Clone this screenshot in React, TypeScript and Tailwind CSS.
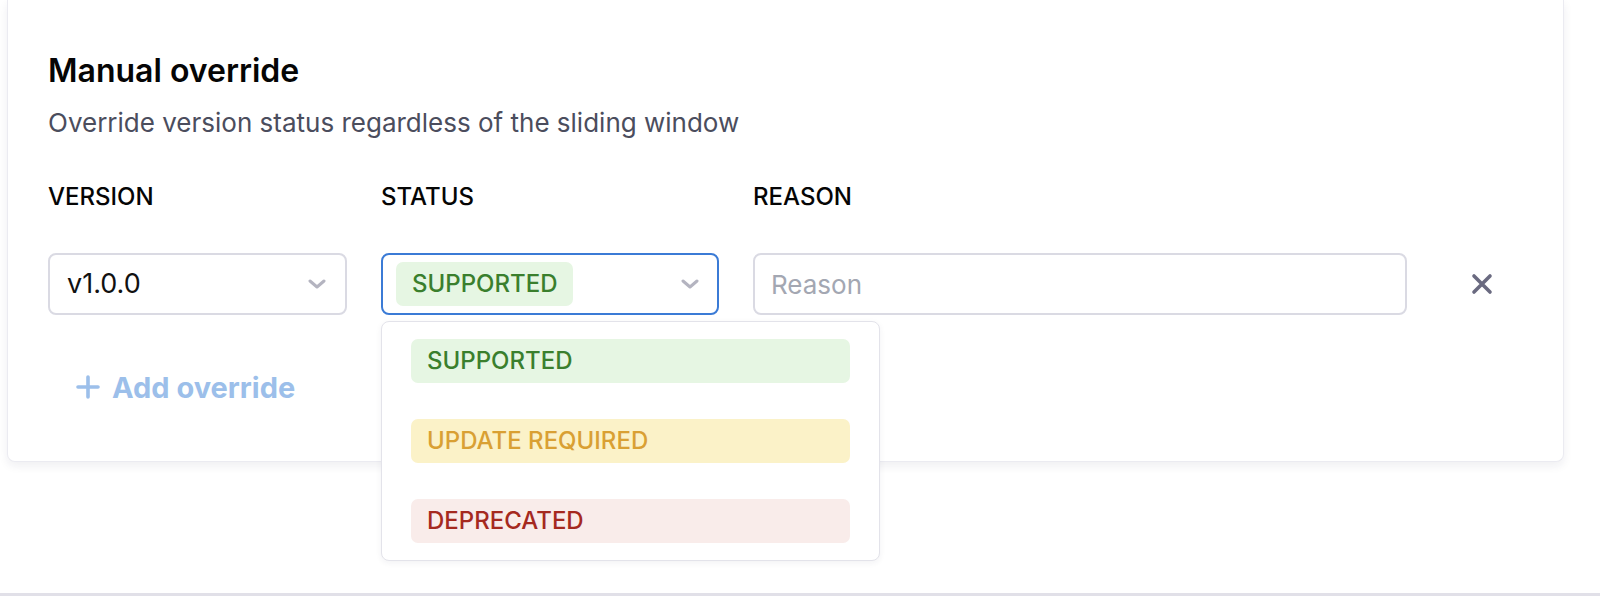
import React from "react";

const Chevron = ({ className }: { className?: string }) => (
  <svg width="18" height="10" viewBox="0 0 18 10" fill="none" className={className}>
    <path d="M2 2l7 6 7-6" stroke="currentColor" strokeWidth="3" strokeLinecap="round" strokeLinejoin="round" />
  </svg>
);

const Chip = ({ label, bg, fg, full }: { label: string; bg: string; fg: string; full?: boolean }) => (
  <div
    className={`${bg} ${fg} ${full ? "w-full" : ""} h-[44px] rounded-[7px] px-[16px] flex items-center text-[24px] font-medium leading-none`}
  >
    {label}
  </div>
);

export default function App() {
  return (
    <div
      className="h-[596px] w-[1600px] bg-white overflow-hidden border-b-[3px] border-[#e1e0e8] box-border pl-[7px] pr-[36px]"
      style={{ fontFamily: "Inter, 'Noto Sans', sans-serif" }}
    >
      <div className="relative bg-white border border-t-0 border-[#ebebf1] rounded-b-[8px] shadow-[0_4px_10px_rgba(30,30,70,0.07)] pl-[40px] pr-[40px] pt-[51px] pb-[52px]">
        <h2 className="text-[32px] leading-[40px] font-semibold text-[#050505]">Manual override</h2>
        <p className="mt-[16px] text-[26px] leading-[32px] text-[#4b4d5d]">
          Override version status regardless of the sliding window
        </p>

        <div className="mt-[42px] grid grid-cols-[299px_338px_654px_82px] gap-x-[34px] text-[24px] leading-[32px] font-medium text-[#050505]">
          <div>VERSION</div>
          <div>STATUS</div>
          <div>REASON</div>
          <div />
        </div>

        <div className="mt-[40px] grid grid-cols-[299px_338px_654px_82px] gap-x-[34px]">
          <div className="h-[62px] rounded-[8px] border-2 border-[#dadae3] flex items-center justify-between pl-[17px] pr-[19px]">
            <span className="text-[27px] text-[#111111]">v1.0.0</span>
            <Chevron className="text-[#b4b4c0]" />
          </div>

          <div className="relative">
            <div className="h-[62px] rounded-[8px] border-2 border-[#3b7bd6] flex items-center justify-between pl-[13px] pr-[18px]">
              <Chip label="SUPPORTED" bg="bg-[#e6f6e3]" fg="text-[#3a7f2d]" />
              <Chevron className="text-[#b4b4c0]" />
            </div>
            <div className="absolute z-10 left-0 top-[68px] w-[499px] bg-white border border-[#e3e3ea] rounded-[8px] shadow-[0_2px_6px_rgba(30,30,70,0.06)] px-[29px] py-[17px] flex flex-col gap-[36px]">
              <Chip label="SUPPORTED" bg="bg-[#e6f6e3]" fg="text-[#3a7f2d]" full />
              <Chip label="UPDATE REQUIRED" bg="bg-[#fbf2c8]" fg="text-[#d9a033]" full />
              <Chip label="DEPRECATED" bg="bg-[#f9ecea]" fg="text-[#a5291f]" full />
            </div>
          </div>

          <div className="h-[62px] rounded-[8px] border-2 border-[#dadae3] flex items-center pl-[16px]">
            <span className="text-[26px] text-[#a3a7b2]">Reason</span>
          </div>

          <div className="flex items-center justify-center">
            <svg width="22" height="22" viewBox="0 0 22 22" fill="none">
              <path d="M3 3l16 16M19 3L3 19" stroke="#6a6a80" strokeWidth="3.6" strokeLinecap="round" />
            </svg>
          </div>
        </div>

        <button className="mt-[50px] ml-[28px] h-[44px] flex items-center gap-[12px] text-[#9cbfea] text-[29px] font-bold leading-none">
          <svg width="24" height="24" viewBox="0 0 24 24" fill="none">
            <path d="M12 2v20M2 12h20" stroke="#9cbfea" strokeWidth="3.6" strokeLinecap="round" />
          </svg>
          <span>Add override</span>
        </button>
      </div>
    </div>
  );
}
